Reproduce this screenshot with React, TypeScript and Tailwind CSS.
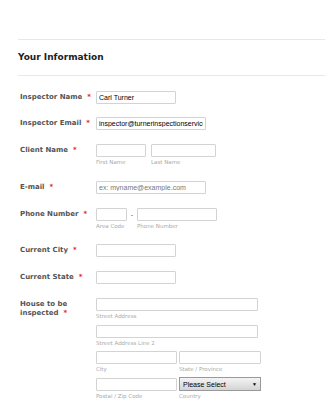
import React from 'react';

const labelFont = { fontFamily: '"DejaVu Sans", Verdana, sans-serif' };
const inputFont = { fontFamily: '"Liberation Sans", Arial, sans-serif' };

function Field({ w, value, placeholder }: { w: string; value?: string; placeholder?: string }) {
  return (
    <input
      readOnly
      defaultValue={value}
      placeholder={placeholder}
      style={inputFont}
      className={`${w} block h-[13px] rounded-[1px] border border-[#d3d3d3] bg-white px-[2px] text-[7px] leading-[11px] text-black outline-none placeholder:text-[#777]`}
    />
  );
}

function Sub({ children }: { children: React.ReactNode }) {
  return (
    <div style={labelFont} className="mt-[2px] whitespace-nowrap text-[5.5px] leading-[7px] text-[#aaa]">
      {children}
    </div>
  );
}

function Label({ children }: { children: React.ReactNode }) {
  return (
    <div style={labelFont} className="w-[78px] shrink-0 pl-[2px] text-[7px] font-bold leading-[13px] text-[#555]">
      {children}
      <span className="ml-[5px] text-[#e8202a]">*</span>
    </div>
  );
}

function Row({ h, label, children }: { h: string; label: React.ReactNode; children: React.ReactNode }) {
  return (
    <div className={`flex items-start ${h}`}>
      <Label>{label}</Label>
      <div className="leading-none">{children}</div>
    </div>
  );
}

export default function App() {
  return (
    <div className="h-[400px] w-[325px] overflow-hidden bg-white">
      <div className="pl-[18px] pt-[39px]">
        <div className="border-t border-[#e8e8e8]" />
        <div style={labelFont} className="flex h-[35px] items-center text-[9px] font-bold text-[#222]">
          Your Information
        </div>
        <div className="border-t border-[#e8e8e8]" />

        <div className="mt-[15px]">
          <Row h="h-[26px]" label="Inspector Name">
            <Field w="w-[80px]" value="Carl Turner" />
          </Row>
          <Row h="h-[27px]" label="Inspector Email">
            <Field w="w-[110px]" value="inspector@turnerinspectionservices.com" />
          </Row>
          <Row h="h-[37px]" label="Client Name">
            <div className="flex gap-[5px]">
              <div>
                <Field w="w-[50px]" />
                <Sub>First Name</Sub>
              </div>
              <div>
                <Field w="w-[65px]" />
                <Sub>Last Name</Sub>
              </div>
            </div>
          </Row>
          <Row h="h-[27px]" label="E-mail">
            <Field w="w-[110px]" placeholder="ex: myname@example.com" />
          </Row>
          <Row h="h-[36px]" label="Phone Number">
            <div className="flex">
              <div>
                <Field w="w-[31px]" />
                <Sub>Area Code</Sub>
              </div>
              <div style={inputFont} className="w-[10px] text-center text-[7px] leading-[13px] text-[#555]">
                -
              </div>
              <div>
                <Field w="w-[80px]" />
                <Sub>Phone Number</Sub>
              </div>
            </div>
          </Row>
          <Row h="h-[27px]" label="Current City">
            <Field w="w-[80px]" />
          </Row>
          <Row h="h-[27px]" label="Current State">
            <Field w="w-[80px]" />
          </Row>
          <div className="flex items-start">
            <div style={labelFont} className="w-[78px] shrink-0 pl-[2px] pt-[2px] text-[7px] font-bold leading-[9px] text-[#555]">
              House to be
              <br />
              inspected
              <span className="ml-[5px] text-[#e8202a]">*</span>
            </div>
            <div className="flex flex-col leading-none">
              <div className="h-[27px]">
                <Field w="w-[162px]" />
                <Sub>Street Address</Sub>
              </div>
              <div className="h-[26px]">
                <Field w="w-[162px]" />
                <Sub>Street Address Line 2</Sub>
              </div>
              <div className="flex h-[27px] gap-[2px]">
                <div>
                  <Field w="w-[81px]" />
                  <Sub>City</Sub>
                </div>
                <div>
                  <Field w="w-[82px]" />
                  <Sub>State / Province</Sub>
                </div>
              </div>
              <div className="flex gap-[2px]">
                <div>
                  <Field w="w-[81px]" />
                  <Sub>Postal / Zip Code</Sub>
                </div>
                <div className="-mt-[1px]">
                  <div
                    style={inputFont}
                    className="flex h-[14px] w-[82px] items-center justify-between border border-[#999] bg-gradient-to-b from-[#f4f4f4] to-[#d4d4d4] pl-[3px] pr-[3px] text-[7px] text-black"
                  >
                    <span>Please Select</span>
                    <span className="text-[5px]">▼</span>
                  </div>
                  <Sub>Country</Sub>
                </div>
              </div>
            </div>
          </div>
        </div>
      </div>
    </div>
  );
}
